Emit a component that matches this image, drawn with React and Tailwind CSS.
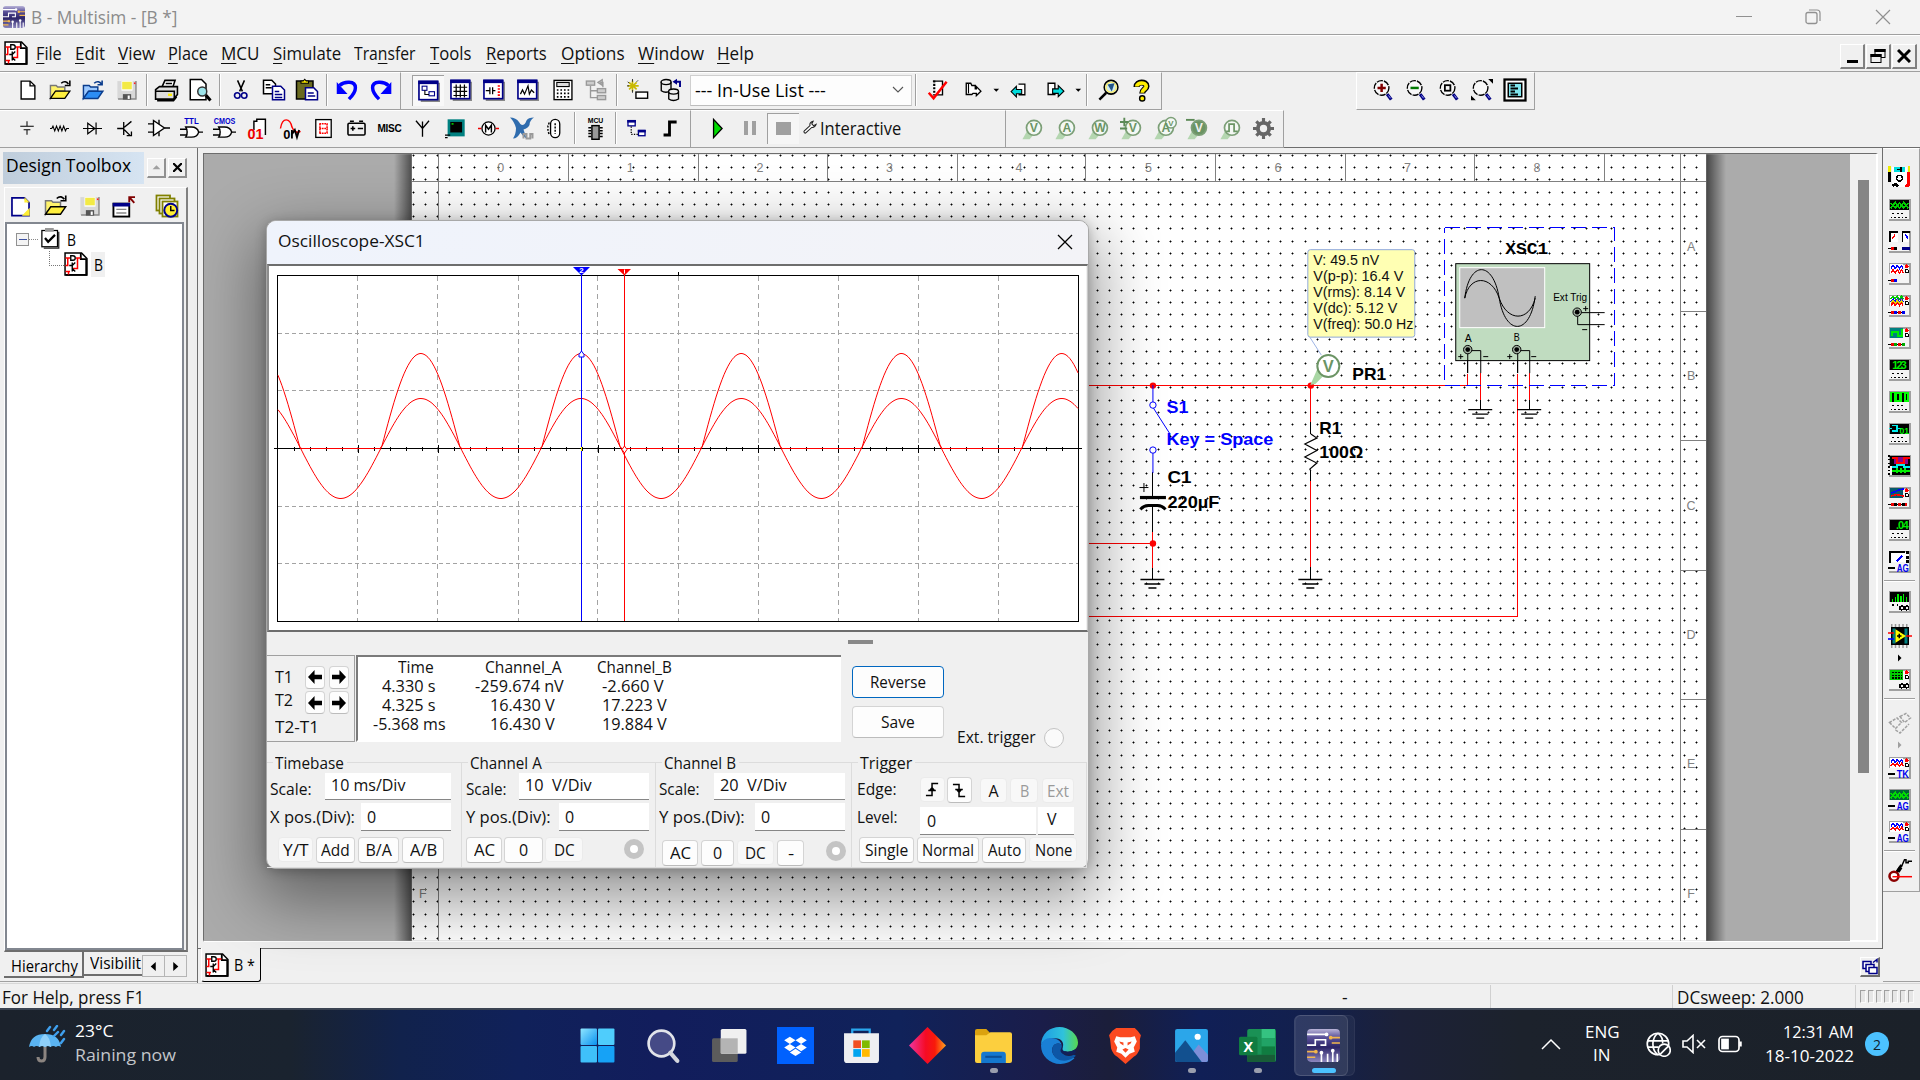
import React, { useLayoutEffect, useRef } from "react";

/* ---------- helpers ---------- */

// One line of text squeezed or stretched to a given width.
function Fit({ w, className = "", children }) {
  const outer = useRef(null);
  const inner = useRef(null);
  useLayoutEffect(() => {
    const natural = inner.current.offsetWidth;
    outer.current.style.width = w + "px";
    inner.current.style.transform = "scaleX(" + w / natural + ")";
  }, [w]);
  return (
    <span ref={outer} className={"inline-block shrink-0 whitespace-pre " + className}>
      <span ref={inner} className="inline-block origin-left">{children}</span>
    </span>
  );
}

const R = ({ f = "#000", b, ...p }) => {
  const [x, y, w, h] = b;
  return <rect x={x} y={y} width={w} height={h} fill={f} {...p} />;
};
const L = ({ d, c = "#000", w = 1, f = "none", ...p }) => <path d={d} stroke={c} strokeWidth={w} fill={f} {...p} />;
const Svg = ({ s = 22, className = "", children, crisp = false, vb = "0 0 16 16" }) => (
  <svg width={s} height={s} viewBox={vb} className={"shrink-0 overflow-visible " + className} shapeRendering={crisp ? "crispEdges" : "auto"}>
    {children}
  </svg>
);

/* ---------- icons ---------- */

const SchemPage = () => (
  <>
    <path d="M.7.7h11l3.6 3.6v11H.7z" fill="#fff" stroke="#000" strokeWidth="1" />
    <path d="M11.2.7v4h4M14.8 5v10.3H1" fill="none" stroke="#000" strokeWidth="1.2" />
    <L c="#f00" d="M1 4h3M1 9h2M1 13h3M8 4h3M9 4v7h-3M2.5 4v5M3 15v-2" />
    <L w={0.9} d="M4.500 2.500h1.500a1.500 1.500 0 0 1 0 3H4.500zM3.500 9h2M5.500 7v6M5.500 9l2-2M5.500 11l2 2" />
  </>
);
const AppArt = () => (
  <>
    <defs><linearGradient id="appart" x2="0" y2="1"><stop offset="0" stopColor="#b9b4d8" /><stop offset=".25" stopColor="#5b529a" /><stop offset=".55" stopColor="#2c2468" /><stop offset="1" stopColor="#8c86bd" /></linearGradient></defs>
    <rect width="16" height="16" rx="2" fill="url(#appart)" />
    <L c="#fff" w={0.8} d="M0 2.600h9M0 7.800h4V5.200h5M4 5.200h5v2.600H6.500M7 11.500V16M10 12v4M12.500 10.500V16M14.700 12v4" />
    <L c="#f2b64d" w={0.8} d="M11 4.200h5M12 6.800h4M0 11h4M0 13.700h4" />
    <g fill="#fff"><circle cx="9.500" cy="2.600" r=".9" /><circle cx="7" cy="11.500" r=".9" /><circle cx="12.500" cy="10.500" r=".9" /></g>
    <g fill="#f2b64d"><circle cx="11.500" cy="4.200" r=".9" /><circle cx="4.300" cy="11" r=".9" /></g>
  </>
);
const G = {
  newdoc: <><path d="M3 1.500h6.500l3.500 3.500v9.500H3z" fill="#fff" stroke="#000" /><L d="M9.500 1.500v3.500h3.500" /></>,
  open: <><path d="M1 4.500h4l1 1h5v3H5l-4 5z" fill="#fff36b" stroke="#777" /><path d="M1 13.500 4.500 8.500h10L11 13.500z" fill="#ffef3e" stroke="#000" strokeWidth=".9" /><L w={1.1} d="M8.500 3c2-2 4-1 5 .500M14.500 1v3.500h-3.500" /></>,
  openblue: <><path d="M1 4.500h4l1 1h5v3H5l-4 5z" fill="#9cc9ff" stroke="#0a3c8c" /><path d="M1 13.500 4.500 8.500h10L11 13.500z" fill="#2c8df5" stroke="#0a3c8c" /><L c="#0a3c8c" w={1.1} d="M8.500 3c2-2 4-1 5 .500M14 1v3h-3.200" /></>,
  save: <><R f="#d8d8d8" b={[1, 1.5, 14, 13]} /><L c="#888" d="M1.500 14.500h13v-13" /><R f="#fff" b={[4, 1.5, 8, 7]} /><R f="#f3ea45" b={[4.5, 2, 7, 5.5]} /><R f="#555" b={[5, 11, 6, 4]} /><R f="#fff" b={[8.5, 12, 1.5, 2.5]} /><R f="#f22" b={[13, 2.5, 1.2, 1.2]} /></>,
  print: <><path d="M5 6 7 1.500h6.500L12 6" fill="#fff" stroke="#000" /><path d="M1 7.500 3.500 5.500h11.500v5l-2.500 3H1z" fill="#ddd" stroke="#000" /><L d="M7.500 3.500h4M1 8.500h12M13 8v5M2 14.500h10.500l2-2.500" /><R f="#fe0" b={[9, 10, 2.5, 1.5]} /></>,
  preview: <><path d="M1.500 1h7.500l3 3v10.500H1.500z" fill="#fff" stroke="#000" /><circle cx="9.500" cy="9" r="3" fill="#9de4ea" stroke="#333" /><L w={2} d="m12 11.500 3 3.500" /></>,
  cut: <><L w={1.1} d="M5.500 1 9 9M10.500 1 7 9" /><g fill="none" stroke="#008" strokeWidth="1.200"><circle cx="5.300" cy="12" r="2" /><circle cx="10.300" cy="12" r="2" /></g></>,
  copy: <><path d="M1 1.500h5.500l2.500 2.500v6.500H1z" fill="#fff" stroke="#000" /><L d="M2.500 4.500h3M2.500 6.500h4" /><path d="M7 5.500h5.500L15 8v6.500H7z" fill="#fff" stroke="#008" /><L c="#008" d="M8.500 9h3M8.500 11h5M8.500 13h5" /></>,
  paste: <><R f="#6a6a20" b={[1, 2, 11, 12]} /><R b={[1, 2, 11, 12]} f="none" stroke="#000" /><path d="M4 3.500V2h1.500L6.500.800 7.500 2H9v1.500z" fill="#fe0" stroke="#000" strokeWidth=".7" /><path d="M7 6.500h5.500L15 9v5.500H7z" fill="#fff" stroke="#008" /><L c="#008" d="M8.500 10h4M8.500 12h5" /></>,
  undo: <><L c="#00f" w={2.4} d="M2.500 4.500c3-3 11-3.500 11 1.500 0 3-2 5.500-4.500 8" /><path d="M.5 2v8.500H8z" fill="#00f" /></>,
  redo: <><L c="#00f" w={2.4} d="M13.500 4.500c-3-3-11-3.500-11 1.500 0 3 2 5.500 4.500 8" /><path d="M15.500 2v8.500H8z" fill="#00f" /></>,
  frame: <><R f="#888" b={[2, 2, 14, 14]} /><R f="#fff" b={[0.7, 1, 13.6, 13.3]} stroke="#008" strokeWidth="1.200" /><R f="#008" b={[0.2, 0.5, 14.6, 2.5]} /></>,
  help: <><L w={4.2} d="M4.500 5.500C4.500 1.500 11.500 1.500 11.500 5c0 2-3 2.500-3 5" /><L c="#fe0" w={2.6} d="M4.700 5.300C4.700 2 11.300 2 11.300 5c0 2-2.800 2.500-2.800 4.500" /><circle cx="8.500" cy="13.500" r="1.800" fill="#fe0" stroke="#000" /></>,
  mcu: <><text x="8" y="4.500" fontSize="4.800" fontWeight="bold" textAnchor="middle" fontFamily="Liberation Sans">MCU</text><R f="#999" b={[5.5, 6, 5, 9.5]} stroke="#000" /><L d="M3 7.500h2M3 9.500h2M3 11.500h2M3 13.500h2M11 7.500h2M11 9.500h2M11 11.500h2M11 13.500h2" /></>,
  hier: <><R f="#fff" b={[1.5, 2, 5.5, 4]} stroke="#008" /><R f="#008" b={[1, 1.5, 6.5, 2]} /><R f="#fff" b={[9.5, 9.5, 5, 4]} stroke="#008" /><R f="#008" b={[9, 9, 6, 2]} /><L d="M4 6.500v6h5" strokeDasharray="1 1" /></>,
};
const Frame = ({ children }) => <Svg>{G.frame}{children}</Svg>;
const Mag = ({ children }) => (
  <Svg>
    <circle cx="7" cy="6.500" r="5.300" fill="#f8f8f8" stroke="#000" strokeWidth="1" strokeDasharray="4.500 .8" />
    <L c="#000080" w={2.4} d="m11 11 3 4" />
    <L c="#99f" w={0.7} d="m12 12 1.500 2" />
    {children}
  </Svg>
);

const Sep = ({ className = "w-[8px]" }) => (
  <div className={"flex h-[32px] shrink-0 justify-center " + className}><div className="w-[2px] border-l border-r border-l-[#a0a0a0] border-r-white" /></div>
);
const C = ({ className = "w-[33px]", children }) => (
  <div className={"flex h-[32px] shrink-0 items-center justify-center " + className}>{children}</div>
);
const I = ({ n, s = 22, w }) => <C className={w}><Svg s={s}>{G[n]}</Svg></C>;
const Drop = ({ className = "w-[12px]" }) => <C className={className}><Svg s={7}><path d="M1 4h13l-6.500 7z" /></Svg></C>;
const Bar = ({ className = "", children }) => (
  <div className={"flex h-[38px] shrink-0 items-center border-t border-r border-b border-t-white border-r-[#a0a0a0] border-b-[#a0a0a0] pb-[2px] " + className}>{children}</div>
);

const ProbeI = ({ t, filled, sign, children }) => (
  <C>
    <Svg s={23}>
      <path d="M1 15.500 4 10l5 2-3 3.500z" fill="#b4d6b0" />
      <circle cx="9" cy="7.500" r="5.200" fill={filled ? "#6b9464" : "#f4f8f4"} stroke="#7c9f77" strokeWidth="1.200" />
      {children}
      <text x="9" y="10.500" fontSize="8.500" fontWeight="bold" textAnchor="middle" fill={filled ? "#f0f0f0" : "#6b9464"} fontFamily="Liberation Sans">{t}</text>
      {sign && <L c="#5d8a57" w={1.3} d={sign} />}
    </Svg>
  </C>
);

/* ---------- top bars ---------- */

function TitleBar() {
  return (
    <div className="flex h-[35px] items-center border-b border-[#a0a0a0] bg-[#f3f3f3] pl-[3px] text-[#8b8b8b]">
      <Svg s={22}><AppArt /></Svg>
      <Fit w={146} className="ml-[6px] text-[18px] leading-[30px]">B - Multisim - [B *]</Fit>
      <div className="ml-auto flex h-full items-center text-[#909090]">
        <svg width="16" height="16" className="mr-[53px]"><L c="currentColor" d="M0 7.500h16" /></svg>
        <svg width="16" height="16" className="mr-[54px]"><rect x="1" y="3.500" width="11" height="11" rx="2" fill="none" stroke="currentColor" strokeWidth="1.300" /><L c="currentColor" w={1.2} d="M4 1h8q3 0 3 3v8" /></svg>
        <svg width="16" height="16" className="mr-[29px]"><L c="currentColor" w={1.2} d="m1 1 14 14M15 1 1 15" /></svg>
      </div>
    </div>
  );
}

const U = ({ children }) => <span className="underline decoration-1 underline-offset-[3px]">{children}</span>;
const MdiBtn = ({ children }) => (
  <div className="flex h-[25px] w-[25px] items-center justify-center border-t border-r-2 border-b-2 border-l border-t-white border-r-[#808080] border-b-[#808080] border-l-white">{children}</div>
);

function MenuBar() {
  return (
    <div className="flex h-[37px] items-center border-t border-b border-t-white border-b-[#a0a0a0] pb-[2px] pl-[4px] text-[17.500px] leading-[30px] text-[#111]">
      <Svg s={24}><SchemPage /></Svg>
      <Fit w={26} className="ml-[8px]"><U>F</U>ile</Fit>
      <Fit w={30} className="ml-[13px]"><U>E</U>dit</Fit>
      <Fit w={37} className="ml-[13px]"><U>V</U>iew</Fit>
      <Fit w={40} className="ml-[13px]"><U>P</U>lace</Fit>
      <Fit w={39} className="ml-[13px]"><U>M</U>CU</Fit>
      <Fit w={68} className="ml-[13px]"><U>S</U>imulate</Fit>
      <Fit w={61} className="ml-[13px]">Tra<U>n</U>sfer</Fit>
      <Fit w={41} className="ml-[15px]"><U>T</U>ools</Fit>
      <Fit w={61} className="ml-[15px]"><U>R</U>eports</Fit>
      <Fit w={64} className="ml-[14px]"><U>O</U>ptions</Fit>
      <Fit w={66} className="ml-[13px]"><U>W</U>indow</Fit>
      <Fit w={37} className="ml-[13px]"><U>H</U>elp</Fit>
      <div className="mt-[8px] mr-[3px] ml-auto flex gap-[1px]">
        <MdiBtn><svg width="13" height="16"><R b={[1, 12, 11, 3]} /></svg></MdiBtn>
        <MdiBtn><svg width="16" height="16"><R f="#f0f0f0" b={[5, 1.5, 10, 8]} stroke="#000" /><R b={[4.5, 1, 11, 3]} /><R f="#f0f0f0" b={[1, 6.5, 10, 8]} stroke="#000" /><R b={[0.5, 6, 11, 3]} /></svg></MdiBtn>
        <MdiBtn><svg width="14" height="14"><L w={3} d="m1 1 12 12M13 1 1 13" /></svg></MdiBtn>
      </div>
    </div>
  );
}

function ToolbarOne() {
  return (
    <div className="flex h-[38px]">
      <Bar className="w-[401px] pl-[11px]">
        <I n="newdoc" /><I n="open" s={23} /><I n="openblue" s={23} /><I n="save" />
        <Sep className="w-[7px]" />
        <I n="print" s={25} /><I n="preview" s={24} />
        <Sep />
        <I n="cut" /><I n="copy" s={24} /><I n="paste" s={24} />
        <Sep />
        <I n="undo" s={23} /><I n="redo" s={23} />
      </Bar>
      <Bar className="w-[761px] pl-[11px]">
        <div className="flex h-[31px] w-[32px] items-center justify-center border-t border-l border-[#a0a0a0] bg-[#f8f8f8]">
          <Frame><R f="#fff" b={[3, 4.5, 3.5, 3]} stroke="#008" strokeWidth=".8" /><R f="#fff" b={[8, 8.5, 4, 3]} stroke="#008" strokeWidth=".8" /><L w={0.8} d="M5 7.500v3h3" /></Frame>
        </div>
        <C><Frame><L w={0.9} d="M2.500 6h10M2.500 9h10M2.500 12h10M4.500 4v9.500M7.500 4v9.500M10.500 4v9.500" /></Frame></C>
        <C className="w-[34px]"><Frame><L w={0.9} d="M2 8.500h3M5 6v5M7 6v5M7 8.500h2" /><L c="#f00" w={1.6} strokeDasharray="1.200 1" d="M11.500 4.500v9" /></Frame></C>
        <C className="w-[34px]"><Frame><L w={0.9} d="M2.500 11 4 8l1.500 3L8 5l1 6 1.500-3 2 2" /></Frame></C>
        <C className="w-[35px]"><Svg><R f="#fff" b={[1.5, 1, 13, 14]} stroke="#000" strokeWidth="1" /><R f="#ddd" b={[3.5, 2.5, 9, 3]} stroke="#000" strokeWidth=".8" /><L w={1.2} strokeDasharray="1.200 1.400" d="M3.500 8h9M3.500 10.500h9M3.500 13h9" /></Svg></C>
        <C className="w-[32px]"><Svg><g fill="#ccc" stroke="#999"><rect x="1" y="1.500" width="6" height="3" /><rect x="9" y="7" width="6" height="3" /><rect x="9" y="12" width="6" height="3" /></g><L c="#999" d="M4 5v8.500h5M4 8.500h5M13 6V2.500h-2M9.500 2.500l3-2v4z" /></Svg></C>
        <Sep className="w-[9px]" />
        <C><Svg><L c="#c9b900" w={1.2} d="M4 1v8M.5 5h8M1.500 2.500l5.500 5M7 2.500l-5.500 5" /><L c="#333" w={0.7} d="M4 0v2M.5 2l1 1M7 2l1-1M4 8v2M0 5h1.500" /><R f="#fff" b={[6.5, 9.5, 8.5, 4.5]} stroke="#000" /></Svg></C>
        <C><Svg s={24}><g fill="#eee" stroke="#000" strokeWidth=".9"><path d="M1.500 2.500v6q3 2 6.500 0v-6" /><ellipse cx="4.700" cy="2.700" rx="3.300" ry="1.700" /><path d="M6.500 9v5q3 2 6.500 0V9" /><ellipse cx="9.700" cy="9" rx="3.300" ry="1.700" /></g><L c="#008" w={1.3} d="M14 6V2.500h-2" /><path d="m9 2.500 3-2v4z" fill="#008" /></Svg></C>
        <div className="ml-[3px] flex h-[31px] w-[222px] items-center border border-[#cfcfcf] border-b-[#bdbdbd] bg-[#fdfdfd] pl-[4px]">
          <Fit w={131} className="text-[17.500px] leading-[26px]">--- In-Use List ---</Fit>
          <svg width="12" height="8" className="ml-[66px]"><L c="#555" w={1.1} d="m1 1 5 5 5-5" /></svg>
        </div>
        <Sep />
        <C><Svg><path d="M5 1.500h7v10H5" fill="#fff" stroke="#000" /><L d="M6 1v10" strokeDasharray="1.500 1" w={1.6} /><L c="#f00" w={1.8} d="m2 10 3.500 4L15 2" /></Svg></C>
        <C className="w-[39px]"><Svg s={18}><path d="M2 2h4l1 2h3v3h1V5l4 4-4 4v-2H8l-1 1H2z" fill="#fff" stroke="#000" strokeWidth="1.200" /><L d="M4 2v9" /></Svg></C>
        <Drop className="w-[8px]" />
        <C className="w-[37px]"><Svg s={17}><path d="M8 2h6v10H8" fill="#fff" stroke="#000" strokeWidth="1.200" /><path d="M1 9l5-5v3h5v4H6v3z" fill="#0dd" stroke="#000" /></Svg></C>
        <C className="w-[37px]"><Svg s={18}><path d="M1 2h6v10H1z" fill="#fff" stroke="#000" strokeWidth="1.200" /><path d="M15 9l-5-5v3H5v4h5v3z" fill="#0dd" stroke="#000" /></Svg></C>
        <Drop className="w-[8px]" />
        <Sep className="w-[10px]" />
        <C><Svg><circle cx="9.500" cy="6" r="5" fill="#cfeaf2" stroke="#000" strokeWidth="1.100" /><circle cx="9.500" cy="6" r="3.700" fill="none" stroke="#fe6" /><path d="m7 4 5-1-2 6z" fill="#258" /><L w={1.8} d="m6 10-5 5" /></Svg></C>
        <I n="help" w="w-[32px]" s={23} />
      </Bar>
      <div className="ml-[194px] flex">
        <Bar className="w-[179px] border-l border-l-white pl-[9px]">
          <C><Mag><L c="#800000" w={1.8} d="M4 6.500h6M7 3.500v6" /></Mag></C>
          <C><Mag><L c="#007800" w={1.8} d="M4 6.500h6" /></Mag></C>
          <C><Mag><R f="none" b={[5, 4.5, 4, 4]} stroke="#000" strokeWidth="1.300" /></Mag></C>
          <C><Mag><path d="M12.500 0H16v3.500zM0 12l3.500 3.500H0z" /></Mag></C>
          <C><Svg s={24}><R f="#fff" b={[1, 1, 14, 14]} stroke="#000" strokeWidth="1.500" /><R f="#7fe6ee" b={[3.5, 3.5, 9, 9]} stroke="#000" /><L w={1.2} d="M5 5h3M5 7h5M5 9h3M5 11h5" /></Svg></C>
        </Bar>
      </div>
    </div>
  );
}

const Gate = ({ t, w }) => (
  <C><Svg s={23}>
    <text x="8" y="5.200" fontSize="5.800" fontWeight="bold" fill="#00c" textAnchor="middle" textLength={w} lengthAdjust="spacingAndGlyphs" fontFamily="Liberation Sans">{t}</text>
    <path d="M4 7h4q4 0 5 3.500Q12 14 8 14H4q2-3.500 0-7z" fill="#fff" stroke="#000" /><L d="M0 8.500h5M0 12.500h5M13 10.500h3" />
  </Svg></C>
);

function ToolbarTwo() {
  return (
    <div className="flex h-[38px] border-b border-[#6d6d6d]">
      <Bar className="w-[691px] pl-[10px]">
        <C><Svg s={18}><L w={0.9} d="M8 2v4.500M2 6.500h12M5 9.500h6M8 9.500V14" /></Svg></C>
        <C><Svg s={19}><L w={0.9} d="M0 8h1.500l1-2 1.500 4 1.500-4 1.500 4 1.500-4 1.500 4 1.500-4 1.500 4 1-2h2" /></Svg></C>
        <C><Svg s={19}><path d="M4 3.500v9L10 8z" fill="#fff" stroke="#000" /><L d="M0 8h16M11 3v10" /></Svg></C>
        <C><Svg s={19}><L d="M1 8h5M6.500 2.500v11M7 7l6-5M7 9l5 5M9 14h4v-3.500" w={1.1} /></Svg></C>
        <C><Svg><path d="M4 2.500v11L12 8z" fill="#fff" stroke="#000" /><L d="M0 5h4M0 11h4M12 8h4M8 2v3M8 11v3" /></Svg></C>
        <Gate t="TTL" w={10} /><Gate t="CMOS" w={15} />
        <C><Svg s={23}><path d="M5.500 9V3h2V1.500h6V12.500" fill="#fff" stroke="#000" strokeWidth="1" /><text x="1" y="15.500" fontSize="10" fontWeight="bold" fill="#e00" fontFamily="Liberation Sans">01</text></Svg></C>
        <C><Svg s={23}><L c="#f00" d="M1 8q1-6 4-6t4 5q2 5 6 3" w={1} /><text x="3" y="15.500" fontSize="9" fontWeight="bold" fontFamily="Liberation Sans">0</text><L w={1.3} d="M9 9v6M9 12l2-3 1.500 5 1.500-5" /></Svg></C>
        <C><Svg s={19}><R f="#fff" b={[1.5, 0.5, 13, 15]} stroke="#000" strokeWidth="1.100" /><L c="#f00" w={1.3} strokeDasharray="1.500 .6" d="M4.500 4h7M4.500 8h7M4.500 12h7M5 4v8M11 4v8" /></Svg></C>
        <C><Svg s={21}><R f="#f0f0f0" b={[1.5, 4, 13, 9]} stroke="#000" strokeWidth="1.200" rx="1" /><L w={1.2} d="M3 2.500h3M10 2.500h3M3.500 8h3.500M9 8h4M5.200 6.300v3.500" /></Svg></C>
        <C><span className="font-['Liberation_Sans'] text-[10px] font-bold tracking-[-0.200px]">MISC</span></C>
        <C><Svg s={19}><L d="M8 15V2M2.500 1.500 8 8l5.500-6.500" w={1.1} /></Svg></C>
        <C><Svg s={21}><R f="#008080" b={[2, 1, 13, 13]} /><R b={[4, 3, 9, 8]} /><R f="#0f0" b={[5, 4, 1.5, 1]} /><L d="M0 13h4M0 15h2" /></Svg></C>
        <C><Svg s={21}><circle cx="8" cy="8" r="5" fill="#fff" stroke="#000" /><L c="#e00" w={1.3} d="M0 8h2.500M13.500 8H16" /><L d="M5.800 11V5.500L8 8.500l2.200-3V11" w={1.1} /></Svg></C>
        <C><Svg s={24}><path d="M0 1q4 0 6 3 1 2 2 2 2 0 3-3 1-2 5-2-3 2-3 5-1 2-4 3l2 6q-3-2-4-4-2 4-5 4 2-3 2-7-1-4-4-7z" fill="#2f6cae" /><L c="#999" w={1.3} d="M9 15v-3h2v3h2.500v-3H15v3" /></Svg></C>
        <C><Svg s={21}><R f="#fff" b={[5, 1, 7, 14]} rx="3.500" stroke="#000" /><L d="M4 3.500 3 6v4l1 2.500M8.500 4v8" strokeDasharray="1.500 1" w={1.1} /></Svg></C>
        <Sep />
        <I n="mcu" s={23} />
        <Sep />
        <I n="hier" s={21} />
        <C><Svg s={19}><L w={2.4} d="M3 13.500h5V2.500h6" /></Svg></C>
      </Bar>
      <Bar className="w-[315px] pl-[10px]">
        <C className="w-[32px]"><Svg s={21}><path d="M5 1v14l6.500-7z" fill="#0d0" stroke="#000" /></Svg></C>
        <C className="w-[34px]"><div className="flex h-[14px] gap-[4px]"><div className="w-[4px] bg-[#a0a0a0]" /><div className="w-[4px] bg-[#a0a0a0]" /></div></C>
        <div className="flex h-[31px] w-[32px] items-center justify-center border-t border-l border-[#a0a0a0] bg-[#f6f6f6]"><div className="h-[13px] w-[15px] bg-[#a0a0a0]" /></div>
        <Svg s={14} className="mb-[3px] ml-[4px]"><path d="M1.500 14.500q-1-1 0-2L8 6.500Q7 3 11.500 1.500L10 4.500l2 2 3-1.500q-1.500 4-5 3.500l-6.500 6q-1 1-2 0z" fill="#fff" stroke="#222" strokeWidth="1.200" /></Svg>
        <Fit w={81} className="ml-[3px] text-[17.500px] leading-[28px] text-[#111]">Interactive</Fit>
      </Bar>
      <Bar className="w-[278px] pl-[10px]">
        <ProbeI t="V" /><ProbeI t="A" /><ProbeI t="W" />
        <ProbeI t="V" sign="M0 3.500h6M3 .500v6M0 8h5" />
        <ProbeI t="A"><circle cx="12.500" cy="4" r="3.700" fill="#f4f8f4" stroke="#7c9f77" /><text x="12.500" y="6" fontSize="5.500" fontWeight="bold" textAnchor="middle" fill="#6b9464" fontFamily="Liberation Sans">V</text></ProbeI>
        <ProbeI t="V" filled sign="M0 2h6" />
        <ProbeI><L c="#6b9464" w={1.2} d="M5 10h2V5h3.500v5H13" /></ProbeI>
        <C><Svg s={21}><g stroke="#666" strokeWidth="3" fill="none"><circle cx="8" cy="8" r="4.300" /><path strokeWidth="2.400" d="M8 0v3M8 13v3M0 8h3M13 8h3M2.500 2.500l2 2M11.500 11.500l2 2M2.500 13.500l2-2M11.500 4.500l2-2" /></g></Svg></C>
      </Bar>
    </div>
  );
}

/* ---------- design toolbox ---------- */

function DesignToolbox() {
  return (
    <div className="flex h-full w-[198px] flex-col border-r border-[#6d6d6d] pt-[4px]">
      <div className="flex h-[32px] pl-[3px]">
        <div className="flex w-[141px] items-center bg-linear-to-r from-[#bfcddb] to-[#d6e4f2] pb-[5px] pl-[3px] text-[18px]"><Fit w={125}>Design Toolbox</Fit></div>
        <div className="mt-[6px] ml-[3px] flex gap-[2px]">
          <div className="flex h-[20px] w-[19px] items-center justify-center border-t border-r-2 border-b-2 border-l border-t-white border-r-[#909090] border-b-[#909090] border-l-white"><Svg s={9}><path d="M1 11h14L8 4z" fill="#a0a0a0" /></Svg></div>
          <div className="flex h-[20px] w-[19px] items-center justify-center border-t border-r-2 border-b-2 border-l border-t-white border-r-[#909090] border-b-[#909090] border-l-white"><svg width="9" height="9"><L w={2.2} d="m0 0 9 9M9 0 0 9" /></svg></div>
        </div>
      </div>
      <div className="mt-[3px] ml-[4px] flex h-[765px] w-[184px] flex-col border-t border-r-2 border-b-2 border-l border-t-white border-r-[#808080] border-b-[#6d6d6d] border-l-white">
        <div className="flex h-[34px] items-center pt-[2px]">
          <C className="ml-[-2px] w-[35px]"><Svg s={21}><path d="M1.500 1.500H11l3.500 3.500v10h-13z" fill="#fff" stroke="#008" strokeWidth="1.300" /><path d="M11 1v4h4M15 9v6H9z" fill="#fe3" /></Svg></C>
          <I n="open" s={24} w="w-[35px]" /><I n="save" s={22} />
          <C className="w-[34px]"><Svg s={23}><R f="#fff" b={[1, 6, 11, 9]} stroke="#000" strokeWidth="1.300" /><R f="#008" b={[0.5, 5.5, 12, 2.5]} /><L c="#888" d="M3 10h7M3 12.500h7" /><L c="#800000" w={1.3} d="m15.500 5.500-3-3.500M12 5V1.500h4" /></Svg></C>
          <div className="ml-[7px] h-px w-[4px] bg-[#999]" />
          <C className="w-[40px]"><Svg s={24}><g fill="#fff" stroke="#808000" strokeWidth="1.200"><rect x="1" y="1" width="9" height="10" /><rect x="3" y="3" width="10" height="10" /><rect x="5" y="5" width="10" height="10" /></g><circle cx="10.500" cy="10.800" r="4.300" fill="#fe3" stroke="#008" strokeWidth="1.300" /><L d="M10.500 8v3h2.500" /></Svg></C>
        </div>
        <div className="h-[728px] w-[179px] border-2 border-[#828790] bg-white pt-[2px] text-[17px] leading-[25px]">
          <div className="flex h-[26px] items-center pl-[9px]">
            <div className="flex h-[13px] w-[13px] items-center justify-center border border-[#919191] bg-[#f4f4f4]"><div className="h-px w-[8px] bg-[#3c50a0]" /></div>
            <div className="w-[9px] border-t border-dotted border-[#888]" />
            <Svg s={20} className="mb-[3px] ml-[2px]"><R f="#fff" b={[1.5, 2, 12.5, 13]} stroke="#000" strokeWidth="1" /><L w={1} d="M15 3v13H3" c="#222" /><R f="#999" b={[4, 0, 7, 3]} /><L w={1.8} d="m4 8 2.500 3L12 5.500" /></Svg>
            <Fit w={9} className="ml-[7px]">B</Fit>
          </div>
          <div className="flex h-[26px] items-center pl-[42px]">
            <div className="mb-[14px] h-[15px] w-[15px] border-b border-l border-dotted border-[#777]" />
            <Svg s={24} className="mb-[3px]"><SchemPage /></Svg>
            <div className="mb-[2px] ml-[3px] flex w-[14px] justify-center bg-[#f0f0f0]"><Fit w={9}>B</Fit></div>
          </div>
        </div>
      </div>
      <div className="flex h-[30px] items-start pl-[4px] text-[17px]">
        <div className="flex h-[26px] w-[80px] shrink-0 items-center border-r-2 border-b-2 border-[#6d6d6d] pt-[3px] pl-[7px]"><Fit w={67} className="leading-[22px]">Hierarchy</Fit></div>
        <div className="flex h-[24px] w-[58px] shrink-0 items-center border-b-2 border-[#6d6d6d] pl-[6px]"><Fit w={51} className="leading-[20px]">Visibilit</Fit></div>
        <div className="mt-[3px] flex h-[22px] w-[45px] shrink-0 border border-[#b5b5b5]">
          <div className="flex w-[22px] items-center justify-center border-r border-[#b5b5b5]"><Svg s={9}><path d="M12 0v16L3 8z" /></Svg></div>
          <div className="flex w-[21px] items-center justify-center"><Svg s={9}><path d="M4 0v16l9-8z" /></Svg></div>
        </div>
      </div>
      <div className="mt-[-1px] w-[197px] border-t border-[#a0a0a0]" />
    </div>
  );
}

/* ---------- schematic ---------- */

const DOTS = (() => {
  const out = [[], []];
  for (let j = 0; j < 65; j++)
    for (let i = 0; i < 106; i++) {
      const x = Math.round(412.5 + i * 12.235);
      const y = Math.round(155 + j * 12.235);
      out[0].push("M" + x + " " + y + "h1v1h-1z");
      out[1].push("M" + (x - 1) + " " + y + "h3v1h-3zM" + x + " " + (y - 1) + "h1v3h-1z");
    }
  return out.map((a) => a.join(""));
})();

const Ground = ({ x, y }) => <L w={1.3} d={`M${x - 12} ${y}h24M${x - 8} ${y + 4.5}h16M${x - 4} ${y + 8.5}h8`} />;
const Lbl = ({ x, y, w, s = 16, f = "#000", b = true, ff = "Liberation Sans", children }) => (
  <text x={x} y={y} textLength={w} lengthAdjust="spacingAndGlyphs" fontSize={s} fontWeight={b ? "bold" : "normal"} fill={f} fontFamily={ff}>{children}</text>
);
const Term = ({ x, y }) => <><circle cx={x} cy={y} r="4.200" fill="#a5b5a5" stroke="#000" /><circle cx={x} cy={y} r="2.400" /></>;

function Schematic() {
  return (
    <svg width="1647" height="787" viewBox="204 154 1647 787" className="block bg-[#ababab]">
      <defs>
        <linearGradient id="sl"><stop offset="0" stopColor="#000" stopOpacity="0" /><stop offset="1" stopColor="#000" stopOpacity=".55" /></linearGradient>
        <linearGradient id="sr"><stop offset="0" stopColor="#000" stopOpacity=".6" /><stop offset="1" stopColor="#000" stopOpacity="0" /></linearGradient>
      </defs>
      <rect x="394" y="154" width="18" height="787" fill="url(#sl)" />
      <rect x="1707" y="154" width="20" height="787" fill="url(#sr)" />
      <rect x="412" y="154" width="1295" height="787" fill="#fff" />
      <path d={DOTS[1]} fill="#868686" shapeRendering="crispEdges" />
      <path d={DOTS[0]} fill="#000" shapeRendering="crispEdges" />
      <g stroke="#808080" fill="none" shapeRendering="crispEdges">
        <path d="M412 181.500h1295M438.500 154v787M1681.500 154v787" />
        {Array.from({ length: 9 }, (_, k) => <path key={k} d={`M${Math.round(568 + k * 129.6)}.5 154v27`} />)}
        {Array.from({ length: 5 }, (_, k) => <path key={k} d={`M412 ${Math.round(311 + k * 129.4)}.5h26M1681 ${Math.round(311 + k * 129.4)}.5h26`} />)}
      </g>
      <g fill="#808080" fontSize="12.500" textAnchor="middle" fontFamily="Liberation Sans">
        {Array.from({ length: 9 }, (_, k) => <text key={k} x={501 + k * 129.6} y="172">{k}</text>)}
        {"ABCDEF".split("").map((c, k) => <text key={c} x="1692" y={251 + k * 129.4}>{c}</text>)}
        <text x="423" y="898">F</text>
      </g>

      <g transform="translate(1 0)">
        {/* wires */}
        <g shapeRendering="crispEdges">
          <L c="#f00" d="M1000 385.500h467.500v-12M1000 543.500h152M1000 616.500h517.500v-243M1310.500 385v38M1310.500 480v87M1152.500 532v36M1480.500 373v27M1529.500 373v27" />
          <L d="M1310.500 422v12M1310.500 471v10M1310.500 567v12M1152.500 472v25M1152.500 507v25M1152.500 568v11M1480.500 400v9M1529.500 400v9M1467.500 349v24M1517.500 349v24" />
        </g>
        <g fill="#f00"><circle cx="1152.500" cy="385.500" r="3.200" /><circle cx="1310.500" cy="385.500" r="3.200" /><circle cx="1152.500" cy="543.500" r="3.200" /></g>
        <L w={1.2} d="M1310.500 434l6 4-12 6 12 6.500-12 6.500 12 6-7 6 1 2" />
        <Ground x={1152} y={579.5} /><Ground x={1310} y={579.5} /><Ground x={1480} y={409.5} /><Ground x={1529} y={409.5} />
        <g stroke="#00f" fill="#fff"><path d="M1152.500 385v17M1152.500 453v20M1153 408l16 25" fill="none" /><circle cx="1152.500" cy="405" r="3.200" /><circle cx="1152.500" cy="450" r="3.200" /></g>
        <L w={3.2} d="M1139.500 497.500h26" />
        <L w={3} d="M1140 509.500q3-4 8-4h9q5 0 8 4" />
        <L d="M1139 487.500h9M1143.500 483v9" />
        <Lbl x={1166} y={412.5} w={22} f="#00f">S1</Lbl>
        <Lbl x={1166} y={445} w={107} f="#00f">Key = Space</Lbl>
        <Lbl x={1167} y={482.5} w={24}>C1</Lbl>
        <Lbl x={1167} y={507.5} w={52}>220µF</Lbl>
        <Lbl x={1319} y={434} w={22}>R1</Lbl>
        <Lbl x={1319} y={458} w={44}>100Ω</Lbl>
        <Lbl x={1352} y={379.5} w={34}>PR1</Lbl>

        {/* probe and its readout */}
        <path d="M1309.500 337 1321 355" stroke="#9db4e4" />
        <path d="m1310 385 7-16 7 6-9 9z" fill="#a9d7a4" />
        <circle cx="1328" cy="366" r="11" fill="#fff" stroke="#6b9464" strokeWidth="2" />
        <Lbl x={1322.500} y={371.5} w={11} s={16} f="#6b9464">V</Lbl>
        <rect x="1307.500" y="249.500" width="107" height="87.500" rx="2.500" fill="#ffffb3" stroke="#8fa8dc" />
        <Lbl b={false} s={14.500} f="#111" x={1313} y={265} w={66}>V: 49.5 nV</Lbl>
        <Lbl b={false} s={14.500} f="#111" x={1313} y={281} w={90}>V(p-p): 16.4 V</Lbl>
        <Lbl b={false} s={14.500} f="#111" x={1313} y={297} w={92}>V(rms): 8.14 V</Lbl>
        <Lbl b={false} s={14.500} f="#111" x={1313} y={313} w={84}>V(dc): 5.12 V</Lbl>
        <Lbl b={false} s={14.500} f="#111" x={1313} y={329} w={100}>V(freq): 50.0 Hz</Lbl>

        {/* oscilloscope symbol */}
        <rect x="1455.500" y="263.500" width="134" height="97" fill="#c0dcc0" stroke="#000" />
        <rect x="1459.500" y="267.500" width="85" height="60" fill="#c0c0c0" stroke="#fff" />
        <L d="M1464.500 298C1469 260 1493 260 1499 298S1530 336 1535 296" />
        <L d="M1464.500 298C1469 275 1491 274 1499 298S1529 322 1535 298" />
        <Lbl b={false} s={10.500} x={1553} y={300.500} w={34}>Ext Trig</Lbl>
        <Lbl b={false} s={10} x={1464.500} y={342} w={7}>A</Lbl>
        <Lbl b={false} s={10} x={1513.500} y={341} w={6}>B</Lbl>
        <L d="M1577.500 312.500h27M1577.500 312v12.500h27M1467 350.500h13.500v22.500M1516 350.500h13.500v22.500M1583 308.500h5M1585.500 306v5M1582 329.500h5M1458 356.500h5M1460.500 354v5M1483 356.500h5M1507 356.500h5M1509.500 354v5M1531 356.500h5" />
        <L d="M1467.500 349v24M1517.500 349v24" />
        <Term x={1577} y={312} /><Term x={1467.500} y={349.500} /><Term x={1516.500} y={349.500} />
        <Lbl ff="Liberation Mono" s={17} x={1505} y={253.500} w={43}>XSC1</Lbl>
      </g>
      <path d="M1445.500 227.500h170v158h-170z" fill="none" stroke="#00f" strokeDasharray="15 6" shapeRendering="crispEdges" />
    </svg>
  );
}

function Workspace() {
  return (
    <div className="flex h-full w-[1685px] flex-col">
      <div className="flex h-[801px] border-r border-b border-[#6d6d6d] pt-[5px] pl-[5px]">
        <div className="flex h-[789px] w-[1675px] border-t border-r-2 border-b-2 border-l border-t-[#6d6d6d] border-r-white border-b-white border-l-[#6d6d6d]">
          <Schematic />
          <div className="flex w-[26px] justify-center pt-[26px]"><div className="h-[593px] w-[11px] bg-[#858585]" /></div>
        </div>
      </div>
      <div className="flex h-[34px] items-start justify-between pr-[3px] pl-[3px]">
        <div className="mt-[-1px] flex h-[34px] w-[60px] items-center rounded-b-[3px] border-r border-b border-l border-r-black border-b-black border-l-white bg-[#f0f0f0] pl-[3px]">
          <Svg s={24}><SchemPage /></Svg>
          <Fit w={21} className="ml-[5px] text-[17px]">B *</Fit>
        </div>
        <div className="mt-[8px] flex h-[20px] w-[20px] items-center justify-center border-t border-r-2 border-b-2 border-l border-t-white border-r-[#6d6d6d] border-b-[#6d6d6d] border-l-white">
          <Svg s={16}><g fill="#fff" stroke="#008" strokeWidth="1.500"><path d="M1 2.500h8v7H1z" /><path d="M4 5.500h8v7H4z" /><path d="M7 8.500h8v6H7z" /></g><L c="#008" w={1.5} d="M11 3.500 15 .500v3" /></Svg>
        </div>
      </div>
    </div>
  );
}

/* ---------- instrument bar ---------- */

const Inst = ({ scr = "#000", full, children, bottom }) => (
  <div className="flex h-[32px] items-center justify-center">
    <Svg s={23} crisp>
      <R f="#a0a0a0" b={[1, 1, 15, 15]} /><R f="#f4f4f4" b={[0, 0.5, 14.5, 14]} />
      <L c="#a0a0a0" d="M1.500 8V1.500h13" />
      <R f={scr} b={full ? [1.5, 1.5, 13, 7] : [1.5, 1.5, 9, 7]} />
      {!full && <><circle cx="13" cy="3" r="1.400" fill="#f00" /><circle cx="13" cy="6.500" r="1.200" fill="#fff" stroke="#000" strokeWidth=".7" /></>}
      {children}
      {bottom || <><L strokeDasharray="1.500 1.500" d="M3 10.500h8" w={0.8} /><L strokeDasharray="1 1.500" d="M2 13.500h12" w={1} /></>}
    </Svg>
  </div>
);
const Tag = ({ t }) => <><L w={1.5} d="M0 12.500h5" /><text x="6" y="15" fontSize="7" fontWeight="bold" fill="#00e" fontFamily="Liberation Sans" textLength="8.500" lengthAdjust="spacingAndGlyphs">{t}</text></>;
const Dots = ({ a = "#e00", b = "#000", w = 12 }) => <><L w={0.9} d={`M0 12.700h${w}`} /><L c={a} w={2} strokeDasharray="2 3" d={`M2 12.700h${w - 2}`} /><L c={b} w={2} strokeDasharray="2 3" d={`M4.500 12.700h${w - 4}`} /></>;
const Zig = ({ y, c, w = 1 }) => <L c={c} w={w} d={`M2 ${y + 1.5}l1.500-2 1.500 2 1.500-2 1.500 2 1.500-2 1 2`} />;
const HSep = () => <div className="flex h-[8px] items-center px-[1px]"><div className="h-[2px] w-full border-t border-b border-t-[#a0a0a0] border-b-white" /></div>;

function InstrumentBar() {
  return (
    <div className="flex h-full w-[37px] flex-col justify-between">
      <div className="flex h-[744px] flex-col border-t border-r border-b border-t-white border-r-[#a0a0a0] border-b-[#a0a0a0] pt-[12px] pr-[3px]">
        <div className="flex h-[32px] items-center justify-center">
          <Svg s={23} crisp><R f="#fff" b={[3, 0.5, 10, 14]} /><R f="#0dd" b={[4.5, 0.5, 7, 4]} /><L d="M6 2.500h2M9 1v3" /><circle cx="8" cy="8.500" r="2" fill="none" stroke="#000" /><L c="#ee0" w={1.5} d="M1 0v4M14.500 0v4" /><L w={2} d="M1 4v7M3 14q2-2 4 0" /><L c="#f00" w={2} d="M14.500 4v8q0 2-3 2" /></Svg>
        </div>
        <Inst full><L c="#0c0" w={1.1} d="M2 3.500l3 3.500 3-3.500 3 3.500 3-3.500M2 7l3-4 3 4 3-4 3 4" /></Inst>
        <Inst full scr="#fff" bottom={<><Dots w={6} /><L c="#008" w={2} d="M10 12.700h5" /></>}><R f="#f0f0f0" b={[7, 1, 3, 8]} /><L d="M1.500 8V1.500H7M10 8V1.500h5" /><L c="#f00" d="m3 6 2-3" /><L c="#00f" d="m12 3 2 3" /></Inst>
        <Inst scr="#fff" bottom={<Dots w={6} b="#00e" />}><Zig y={3} c="#00f" /><Zig y={6} c="#f00" /></Inst>
        <Inst scr="#fff" bottom={<Dots b="#00e" />}><Zig y={2} c="#0c0" /><Zig y={4} c="#00f" /><Zig y={5} c="#dd0" /><Zig y={6.5} c="#f00" /></Inst>
        <Inst scr="#008080" bottom={<Dots b="#0a0" />}><L c="#0e0" w={1.5} d="M3 7V4h4v3h3V2" /></Inst>
        <Inst full><text x="3" y="7.700" fontSize="7.500" fontWeight="bold" fill="#0e0" fontFamily="Liberation Sans" textLength="10">123</text></Inst>
        <Inst full scr="#0f0"><L d="M3.500 2v6M7 3v4M10.500 2v6M13 3v4" /></Inst>
        <Inst full><path d="M3 2.500h3.500v4H3M1 4.500h2M6.500 4.500h3" fill="none" stroke="#0ee" strokeWidth="1.200" /><text x="8" y="8.500" fontSize="6" fontWeight="bold" fill="#0e0" fontFamily="Liberation Sans">01</text></Inst>
        <Inst full bottom={<><R b={[3, 1.5, 12, 13]} /><R f="#808" b={[4, 2, 10, 5]} /><L c="#f00" w={1.3} d="M3 3h3v3h5V3h4" /><L c="#0ee" w={1.3} d="M3 9h3V7.500h5V9h4" /><L c="#0e0" w={1.3} d="M3 12h12M6 10v3M9 10v3M12 10v3" /><L strokeDasharray="1 1.500" d="M.8 1v14" w={1.2} /></>} />
        <Inst scr="#075a6c" bottom={<Dots w={13} />}><L c="#00f" d="M2 5l5-2 4-1" /><L c="#f00" d="M2 7l4-1 5 1" /></Inst>
        <Inst full><text x="5.500" y="7.700" fontSize="7.500" fontWeight="bold" fill="#0e0" fontFamily="Liberation Sans" textLength="9">.04</text></Inst>
        <Inst full scr="#fff" bottom={<Tag t="AG" />}><L d="M1.500 9V1.500h10" w={1.5} /><L c="#00f" w={1.3} d="m6 8 4-4" /><L w={2} strokeDasharray="2 1" d="M13.500 1v8" /></Inst>
        <HSep />
        <Inst full bottom={<><L strokeDasharray="1.500 1.500" d="M3 10.500h4" /><circle cx="9.500" cy="12.500" r="1.300" fill="none" stroke="#000" /><circle cx="13" cy="12.500" r="1.300" fill="none" stroke="#000" /></>}><L c="#0e0" d="M3 6v2M5 5v3M7 3v5M9 4v4M11 2.500v5.500M13 5v3" w={0.8} /></Inst>
        <div className="mt-[3px] flex h-[32px] items-center justify-center">
          <Svg s={24}><L c="#999" strokeDasharray="1 1.500" w={2} d="M2 1h12M2 15h12" /><R b={[2, 2, 12, 12]} /><R f="#008080" b={[3, 3, 2, 10]} /><R f="#008080" b={[11, 3, 2, 10]} /><path d="M5 3.500v9L12 8z" fill="#ff0" /><L d="M6 8h3M7.500 6.500v3" /><L c="#f00" w={1.1} d="M0 6h4M12 8h4" /><L c="#00f" w={1.1} d="M0 10h4" /></Svg>
        </div>
        <div className="flex h-[11px] items-center justify-center"><Svg s={8}><path d="M4 1v14l7-7z" /></Svg></div>
        <Inst scr="#0c0" bottom={<><circle cx="9.500" cy="12.500" r="1.300" fill="none" stroke="#000" /><circle cx="13" cy="12.500" r="1.300" fill="none" stroke="#000" /></>}><L strokeDasharray="1 1" w={0.9} d="M3 3h7M3 5h7M3 7h7" /></Inst>
        <HSep />
        <div className="mt-[5px] flex h-[32px] items-center justify-center"><Svg s={24}><L c="#a0a0a0" w={1} d="M1 7l4 4 4-4-3-3zM8 3l4-2 3 3-4 3zM5 12l3 2 6-6" strokeDasharray="2 .8" /></Svg></div>
        <div className="flex h-[9px] items-center justify-center"><Svg s={8}><path d="M4 1v14l7-7z" fill="#a0a0a0" /></Svg></div>
        <div className="h-[2px]" />
        <Inst scr="#fff" bottom={<Tag t="TK" />}><Zig y={3} c="#00f" /><Zig y={5.5} c="#f00" /></Inst>
        <Inst full scr="#063" bottom={<Tag t="AG" />}><L c="#0d0" w={1.1} d="M2 3.500l3 3.500 3-3.500 3 3.500 3-3.500M2 7l3-4 3 4 3-4 3 4" /></Inst>
        <Inst scr="#fff" bottom={<Tag t="AG" />}><Zig y={3} c="#00f" /><Zig y={5.5} c="#f00" /></Inst>
        <HSep />
        <div className="flex h-[32px] items-center justify-center"><Svg s={24}><L w={1.8} d="M5 10 9 4" /><L w={2.6} d="M6.500 8.500l2-3" /><L w={1} d="M9 5l2-4.500h1v2h1.500V1.500H16" /><circle cx="4" cy="11.500" r="3" fill="#fff" stroke="#8b0000" strokeWidth="1.700" /><L c="#f00" w={1} d="M3 11.800h13" /></Svg></div>
      </div>
      <div className="mb-[1px] border-t border-[#a0a0a0]" />
    </div>
  );
}

/* ---------- oscilloscope window ---------- */

const PX = (x) => Math.cos(((x - 581) / 160.2) * 2 * Math.PI);
const curve = (fn) => {
  let d = "";
  for (let x = 278; x <= 1078; x += 2) d += (d ? "L" : "M") + x + " " + (448.5 - fn(PX(x))).toFixed(1);
  return d;
};
const CH_A = curve((v) => Math.max(0, 97 * v - 2));
const CH_B = curve((v) => 50 * v);
const TICKS = Array.from({ length: 49 }, (_, k) => {
  const h = (k + 1) % 5 === 0 ? 4 : 2;
  return "M" + (294 + k * 16) + ".5 " + (448.5 - h) + "v" + 2 * h;
}).join("");

function Plot() {
  return (
    <svg width="817" height="364" viewBox="269 266 817 364" className="block bg-white">
      <g stroke="#a3a3a3" fill="none" shapeRendering="crispEdges">
        <path strokeDasharray="5 4" d="M357.500 276v345M437.500 276v345M518.500 276v345M597.500 276v345M678.500 276v345M758.500 276v345M838.500 276v345M918.500 276v345M998.500 276v345" />
        <path strokeDasharray="4 3" d="M278 333.500h800M278 390.500h800M278 506.500h800M278 563.500h800" />
      </g>
      <g stroke="#000" fill="none" shapeRendering="crispEdges">
        <path d="M277.500 275.500h801v346h-801zM678.500 272v4M274 448.500h808" />
        <path d={TICKS} />
      </g>
      <L c="#f00" d={CH_A} /><L c="#f00" d={CH_B} />
      <g shapeRendering="crispEdges"><L c="#00f" d="M581.500 275v346" /><L c="#f00" d="M624.500 275v346" /></g>
      <path d="M573 267h17l-8.500 8.500z" fill="#00f" /><path d="M617.500 269h13.500l-6.500 6.500z" fill="#f00" />
      <text x="581.500" y="273" fontSize="8" fontWeight="bold" fill="#fff" textAnchor="middle" fontFamily="Liberation Sans">2</text>
      <L c="#fff" d="M624.500 269.500v4" />
      <path d="m581.500 351 2.500 3.500v2.500h-5v-2.500z" fill="#fff" stroke="#00f" />
      <path d="m624.500 446 2.500 3.500-2.500 3.500-2.500-3.500z" fill="#fff" stroke="#f00" />
      <path d="M581.500 447v4" stroke="#ff0" />
    </svg>
  );
}

const TONES = {
  raised: "h-[26px] border-[#d4d4d4] border-b-[#bcbcbc] bg-[#fdfdfd]",
  flat: "h-[25px] border-[#ebebeb] bg-[#f8f8f8]",
  dim: "h-[25px] border-[#ebebeb] bg-[#f8f8f8] text-[#9a9a9a]",
  arrow: "h-[23px] border-[#d4d4d4] border-b-[#bcbcbc] bg-[#fdfdfd]",
  big: "h-[32px] border-[#d4d4d4] border-b-[#bcbcbc] bg-[#fdfdfd]",
  primary: "h-[32px] border-[#0067c0] bg-[#fdfdfd]",
};
const Btn = ({ className = "", w, tone = "raised", children }) => (
  <div className={"flex shrink-0 items-center justify-center rounded-[4px] border leading-[20px] " + TONES[tone] + " " + className}>
    {w ? <Fit w={w}>{children}</Fit> : children}
  </div>
);
const Field = ({ className = "pl-[6px]", w, children }) => (
  <div className={"flex shrink-0 items-center border-b border-[#868686] bg-white leading-[20px] " + className}><Fit w={w}>{children}</Fit></div>
);
const Arrow = ({ flip }) => (
  <Btn tone="arrow" className="w-[20px]"><Svg s={14} className={flip ? "-scale-x-100" : ""}><path d="M0 8 7.500 0v5.500H16v5H7.500V16z" /></Svg></Btn>
);
const Ring = ({ className }) => <div className={"h-[20px] w-[20px] shrink-0 rounded-full border-[6.500px] border-[#c4c4c4] bg-white " + className} />;

const Group = ({ title, tw, className, children }) => (
  <div className={"flex h-[115px] flex-col " + className}>
    <div className="flex h-[18px] items-center">
      <div className="w-[6px] border-t border-[#dcdcdc]" />
      <Fit w={tw} className="mr-[3px] ml-[2px] pt-[2px] leading-[18px]">{title}</Fit>
      <div className="grow border-t border-[#dcdcdc]" />
    </div>
    <div className="mt-[-9px] flex grow flex-col border-r border-b border-[#dcdcdc] pt-[9px]">{children}</div>
  </div>
);
const Row = ({ className = "h-[32px]", children }) => <div className={"flex items-start " + className}>{children}</div>;

const READ = [
  ["Time", 36, "ml-[40px] w-[87px]", "Channel_A", 77, "w-[112px]", "Channel_B", 75],
  ["4.330 s", 54, "ml-[24px] w-[93px]", "-259.674 nV", 89, "w-[127px]", "-2.660 V", 62],
  ["4.325 s", 54, "ml-[24px] w-[108px]", "16.430 V", 65, "w-[112px]", "17.223 V", 65],
  ["-5.368 ms", 73, "ml-[15px] w-[117px]", "16.430 V", 65, "w-[112px]", "19.884 V", 65],
];

function Scope() {
  return (
    <div className="absolute top-[220px] left-[266px] flex h-[649px] w-[823px] flex-col rounded-[10px] border border-[#a8a8a8] bg-[#f0f0f0] text-[16px] text-[#111] shadow-[0_24px_64px_8px_rgba(0,0,0,0.42),0_2px_12px_rgba(0,0,0,0.25)]">
      <div className="flex h-[43px] shrink-0 items-center justify-between rounded-t-[9px] bg-linear-to-r from-[#eff3fc] to-[#f3f3f7] pr-[15px] pb-[2px] pl-[11px]">
        <Fit w={147} className="text-[16.500px]">Oscilloscope-XSC1</Fit>
        <svg width="16" height="16"><L w={1.3} d="m1 1 14 14M15 1 1 15" /></svg>
      </div>
      <div className="h-[368px] shrink-0 border-t-2 border-r border-b-2 border-l-2 border-t-[#6d6d6d] border-r-[#c8c8c8] border-b-[#6d6d6d] border-l-[#8d8d8d]"><Plot /></div>
      <div className="flex h-[23px] shrink-0 justify-center pt-[8px]"><div className="ml-[366px] h-[4px] w-[25px] bg-[#888]" /></div>
      <div className="flex h-[98px] shrink-0">
        <div className="flex h-[87px] w-[88px] flex-col border-t border-r border-b border-[#a0a0a0] pt-[8px] pl-[8px]">
          <div className="flex h-[26px] items-center gap-[4px]"><Fit w={18} className="mr-[8px]">T1</Fit><Arrow /><Arrow flip /></div>
          <div className="flex h-[25px] items-center gap-[4px]"><Fit w={18} className="mr-[8px] pb-[6px]">T2</Fit><Arrow /><Arrow flip /></div>
          <Fit w={44} className="leading-[24px]">T2-T1</Fit>
        </div>
        <div className="ml-[1px] flex h-[87px] w-[485px] flex-col border-t-2 border-b-2 border-l-2 border-t-[#7a7a7a] border-b-white border-l-[#7a7a7a] bg-white pt-[1px]">
          {READ.map(([a, aw, ac, b, bw, bc, c, cw], i) => (
            <div key={i} className="flex h-[19px] shrink-0 leading-[19px]">
              <div className={"shrink-0 " + ac}><Fit w={aw}>{a}</Fit></div>
              <div className={"shrink-0 " + bc}><Fit w={bw}>{b}</Fit></div>
              <Fit w={cw}>{c}</Fit>
            </div>
          ))}
        </div>
        <div className="ml-[11px] flex flex-col gap-[8px] pt-[11px]">
          <Btn tone="primary" w={56} className="w-[92px]">Reverse</Btn>
          <Btn tone="big" w={34} className="w-[92px]">Save</Btn>
        </div>
        <div className="flex items-end pb-[5px] pl-[13px]">
          <Fit w={79} className="leading-[22px]">Ext. trigger</Fit>
          <div className="ml-[8px] h-[20px] w-[20px] rounded-full border border-[#c4c4c4] bg-[#fafafa]" />
        </div>
      </div>
      <div className="flex shrink-0">
        <Group title="Timebase" tw={69} className="w-[195px]">
          <Row>
            <Fit w={42} className="mt-[8px] ml-[3px] leading-[20px]">Scale:</Fit>
            <Field w={74} className="mt-[2px] ml-[13px] h-[27px] w-[126px] pb-[3px] pl-[6px]">10 ms/Div</Field>
          </Row>
          <Row>
            <Fit w={85} className="mt-[4px] ml-[3px] leading-[20px]">X pos.(Div):</Fit>
            <Field w={9} className="ml-[6px] h-[28px] w-[90px] pl-[6px]">0</Field>
          </Row>
          <Row className="h-[32px] gap-[3px] pt-[2px] pl-[11px]">
            <Btn w={26} tone="flat" className="w-[35px]">Y/T</Btn><Btn w={29} className="w-[39px]">Add</Btn><Btn w={26} className="w-[41px]">B/A</Btn><Btn w={27} className="w-[42px]">A/B</Btn>
          </Row>
        </Group>
        <Group title="Channel A" tw={72} className="w-[194px]">
          <Row>
            <Fit w={41} className="mt-[8px] ml-[4px] leading-[20px]">Scale:</Fit>
            <Field w={67} className="mt-[2px] ml-[12px] h-[27px] w-[130px] pb-[3px] pl-[6px]">10  V/Div</Field>
          </Row>
          <Row>
            <Fit w={85} className="mt-[4px] ml-[4px] leading-[20px]">Y pos.(Div):</Fit>
            <Field w={9} className="ml-[8px] h-[28px] w-[90px] pl-[6px]">0</Field>
          </Row>
          <Row className="h-[32px] gap-[2px] pt-[2px] pl-[4px]">
            <Btn w={21} className="w-[36px]">AC</Btn><Btn w={9} className="w-[39px]">0</Btn><Btn w={21} tone="flat" className="w-[38px]">DC</Btn>
            <Ring className="mt-[2px] ml-[39px]" />
          </Row>
        </Group>
        <Group title="Channel B" tw={72} className="w-[196px]">
          <Row>
            <Fit w={41} className="mt-[8px] ml-[3px] leading-[20px]">Scale:</Fit>
            <Field w={67} className="mt-[2px] ml-[14px] h-[27px] w-[131px] pb-[3px] pl-[6px]">20  V/Div</Field>
          </Row>
          <Row>
            <Fit w={86} className="mt-[4px] ml-[3px] leading-[20px]">Y pos.(Div):</Fit>
            <Field w={9} className="ml-[10px] h-[28px] w-[90px] pl-[6px]">0</Field>
          </Row>
          <Row className="h-[32px] gap-[3px] pt-[5px] pl-[6px]">
            <Btn w={21} className="w-[36px]">AC</Btn><Btn w={9} className="w-[33px]">0</Btn><Btn w={21} tone="flat" className="w-[37px]">DC</Btn><Btn w={6} className="w-[27px]">-</Btn>
            <Ring className="mt-[1px] ml-[19px]" />
          </Row>
        </Group>
        <Group title="Trigger" tw={52} className="w-[235px]">
          <Row className="h-[34px] pt-[6px] pl-[5px]">
            <Fit w={40} className="mt-[2px] leading-[20px]">Edge:</Fit>
            <Btn tone="flat" className="ml-[23px] w-[25px]"><Svg s={15}><L w={1.6} d="M1 14.500h6.500v-13H14M3.500 9h8M5 9l2.500-3L10 9" /></Svg></Btn>
            <Btn className="ml-[2px] w-[25px]"><Svg s={15}><L w={1.6} d="M1 1.500h6.500v13H14M3.500 7h8M5 7l2.500 3L10 7" /></Svg></Btn>
            <Btn tone="flat" w={10} className="ml-[8px] mt-[1px] w-[27px]">A</Btn><Btn tone="dim" w={9} className="ml-[3px] mt-[1px] w-[28px]">B</Btn><Btn tone="dim" w={22} className="ml-[4px] mt-[1px] w-[32px]">Ext</Btn>
          </Row>
          <Row className="h-[30px] pl-[5px]">
            <Fit w={41} className="mt-[2px] leading-[20px]">Level:</Fit>
            <Field w={9} className="mt-[2px] ml-[22px] h-[28px] w-[116px] pl-[7px]">0</Field>
            <Field w={10} className="mt-[2px] ml-[2px] h-[28px] w-[36px] pb-[3px] pl-[9px]">V</Field>
          </Row>
          <Row className="h-[32px] gap-[3px] pt-[2px] pl-[7px]">
            <Btn w={43} className="w-[55px]">Single</Btn><Btn w={52} className="w-[62px]">Normal</Btn><Btn w={33} className="w-[44px]">Auto</Btn><Btn w={37} tone="flat" className="w-[48px]">None</Btn>
          </Row>
        </Group>
      </div>
    </div>
  );
}

/* ---------- status bar and taskbar ---------- */

function StatusBar() {
  return (
    <div className="flex h-[25px] items-center border-t border-[#d7d7d7] pt-[1px] text-[17.500px] leading-[24px] text-[#111]">
      <div className="flex w-[1342px] pl-[2px]"><Fit w={142}>For Help, press F1</Fit></div>
      <div className="w-[148px]">-</div>
      <div className="h-[23px] w-[182px] border-l border-[#d0d0d0]" />
      <div className="flex h-[23px] w-[183px] items-center border-l border-[#d0d0d0] pl-[4px]"><Fit w={127}>DCsweep: 2.000</Fit></div>
      <div className="flex h-[23px] items-center gap-[2px] border-l border-[#d0d0d0] pl-[4px]">
        {[0, 1, 2, 3, 4, 5, 6].map((k) => <div key={k} className="h-[13px] w-[6px] border-t border-r border-b border-l border-t-[#a0a0a0] border-r-[#fafafa] border-b-[#fafafa] border-l-[#a0a0a0] bg-[#e6e6e6]" />)}
      </div>
    </div>
  );
}

const TaskIcon = ({ children, dot, on }) => (
  <div className="relative flex h-full w-[66px] items-center justify-center pl-[1px]">
    {on && <div className="absolute top-[5px] left-[5px] h-[61px] w-[60px] rounded-[6px] border border-white/5 bg-white/5" />}
    {on && <div className="absolute top-[5px] left-[4px] h-[61px] w-[54px] rounded-[6px] border border-white/10 bg-white/8" />}
    <svg width="37" height="37" viewBox="0 0 36 36" className="relative">{children}</svg>
    {dot && <div className="absolute bottom-[7px] left-[30px] h-[5px] w-[8px] rounded-full bg-[#9a9ead]" />}
    {on && <div className="absolute bottom-[7px] left-[22px] h-[5px] w-[24px] rounded-full bg-[#4cc2ff]" />}
  </div>
);

function Taskbar() {
  return (
    <div className="flex h-[72px] border-t-2 border-[#3b4352] bg-[linear-gradient(90deg,#1b222c_0px,#1a232f_290px,#11224c_400px,#10215a_520px,#121d5c_660px,#10225a_900px,#1a1d4a_1040px,#1b1e3a_1110px,#101f56_1200px,#13204c_1320px,#1c2138_1400px,#1c222c_1520px,#1b2129_1920px)] text-white">
      <div className="flex w-[564px] pt-[15px] pl-[28px]">
        <svg width="38" height="38" viewBox="0 0 38 38">
          <path d="M17 18v14q0 4-3.500 4T10 32" fill="none" stroke="#8b8480" strokeWidth="3" />
          <path d="M1 22Q3 9 17 9t16 13q-3-2-5 0-3-2-5.500 0-3-2-5.500 0-3-2-5.500 0-3-2-5.500 0-2-2-5 0z" fill="#5ab4f2" />
          <path d="M11 22q1-10 6-13 5 3 6 13-3-2-6 0-3-2-6 0z" fill="#8fd0fa" />
          <path d="m19 6 3-4M26 5l3-4M26 11l4-4M33 10l3-4M33 18l3-4" stroke="#3fa0ee" strokeWidth="2.400" strokeLinecap="round" />
        </svg>
        <div className="ml-[9px] flex flex-col text-[16.500px] leading-[24px]">
          <Fit w={38} className="mt-[-6px]">23°C</Fit>
          <Fit w={101} className="text-[#c3c6ca]">Raining now</Fit>
        </div>
      </div>
      <TaskIcon>
        <defs><linearGradient id="wg" x2="1" y2="1"><stop offset="0" stopColor="#8fe6ff" /><stop offset="1" stopColor="#0a92f0" /></linearGradient></defs>
        <g fill="url(#wg)"><rect x="1.500" y="1.500" width="16" height="16" rx="1" /><rect x="18.500" y="1.500" width="16" height="16" rx="1" fill="#4fcdfc" /><rect x="1.500" y="18.500" width="16" height="16" rx="1" fill="#3fc0fa" /><rect x="18.500" y="18.500" width="16" height="16" rx="1" fill="#16a2f6" /></g>
      </TaskIcon>
      <TaskIcon><circle cx="16" cy="16" r="12.500" fill="#454a86" stroke="#e2e4ea" strokeWidth="2.600" /><path d="m24.500 25 7 8" stroke="#d4d6de" strokeWidth="4" strokeLinecap="round" /></TaskIcon>
      <TaskIcon><rect x="1" y="11" width="25" height="23" rx="1.500" fill="#5c5c5c" /><rect x="9.500" y="2" width="25" height="24" rx="1.500" fill="#f0f0f0" /><rect x="9.500" y="11" width="16.500" height="15" fill="#b4b4b4" /></TaskIcon>
      <TaskIcon><rect width="36" height="36" fill="#0061fe" /><g fill="#fff"><path d="m12.500 9.500 5.500 3.500-5.500 3.500L7 13zM23.500 9.500 29 13l-5.500 3.500L18 13zM12.500 16.500 18 20l-5.500 3.500L7 20zM23.500 16.500 29 20l-5.500 3.500L18 20zM18 21.200l5.500 3.500L18 28.200l-5.500-3.500z" /></g></TaskIcon>
      <TaskIcon><path d="M9 8V2.500h17V8" fill="none" stroke="#2aa7ee" strokeWidth="2.200" /><path d="M1 6h34v26q0 3-3 3H4q-3 0-3-3z" fill="#eeeff2" /><rect x="10" y="13" width="7.500" height="7.500" fill="#f25022" /><rect x="18.500" y="13" width="7.500" height="7.500" fill="#7fba00" /><rect x="10" y="21.500" width="7.500" height="7.500" fill="#00a4ef" /><rect x="18.500" y="21.500" width="7.500" height="7.500" fill="#ffb900" /></TaskIcon>
      <TaskIcon>
        <defs><linearGradient id="dg"><stop offset="0" stopColor="#f0359f" /><stop offset=".45" stopColor="#f50b25" /><stop offset=".7" stopColor="#f81a0a" /><stop offset="1" stopColor="#ffa51f" /></linearGradient></defs>
        <path d="m18 0 18 18-18 18L0 18z" fill="url(#dg)" />
      </TaskIcon>
      <TaskIcon dot><path d="M0 4q0-2 2-2h9l4 4v6H0z" fill="#dba20f" /><path d="M0 8h11l4-3h19q2 0 2 2v26q0 2-2 2H2q-2 0-2-2z" fill="#fccf3e" /><path d="M6 35V27q0-3 3-3h18q3 0 3 3v8z" fill="#1478cf" /><path d="M10 29h16" stroke="#0b4f96" strokeWidth="2" /></TaskIcon>
      <TaskIcon>
        <defs><linearGradient id="eg"><stop offset="0" stopColor="#1e9be4" /><stop offset=".6" stopColor="#2fc2dc" /><stop offset="1" stopColor="#58d84e" /></linearGradient></defs>
        <path d="M0 18C0 6 9 0 18 0s18 7 18 15c0 6-5 9-10 9-4 0-6-1-5-4 2-4-1-9-7-9C6 11 1 14 0 18z" fill="url(#eg)" />
        <path d="M0 18c1-5 6-8 11-7 5 0 8 3 9 6-5-3-10 1-9 7 2 8 11 10 19 6 2-1 3 0 2 1-3 3-8 5-13 5C8 36 0 28 0 18z" fill="#1a80d6" />
        <path d="M11 24c-1-6 4-10 9-7 1 2 0 3 0 5-1 5 6 8 12 5l2 1q-2 2-4 3c-8 4-17 1-19-7z" fill="#0d56a6" />
        <path d="M20 17c1 3-1 4-1 6 0 2 3 4 8 4 3 0 6-1 7-2l-1-3q-3 2-7 2c-4 0-6-1-5-4z" fill="#11205a" />
      </TaskIcon>
      <TaskIcon><path d="M9 1h18l3 3 3 4-1 4 0 9q-2 6-6 8l-8 7-8-7q-4-2-6-8l-1-9-1-4 3-4z" fill="#fb4a21" /><path d="M9 9l4 1h10l4-1 2 5-3 6 1 4-5 2-4 4-4-4-5-2 1-4-3-6z" fill="#fff" /><path d="m12 14 4 1 0 3-3-2zM24 14l-4 1 0 3 3-2zM15 22l3 3 3-3-3-1.500z" fill="#fb4a21" /></TaskIcon>
      <TaskIcon dot><rect x="2" y="2" width="32" height="32" rx="2" fill="#2ba6ea" /><path d="M18 26 25 17l9 10v5q0 2-2 2H20z" fill="#7d8fd8" /><path d="M2 25 12 13l16 21H4q-2 0-2-2z" fill="#12508f" /><circle cx="24" cy="9.500" r="3" fill="#fff" /></TaskIcon>
      <TaskIcon dot><rect x="8" y="2" width="28" height="32" rx="2" fill="#1a9155" /><rect x="22" y="2" width="13" height="9" fill="#35c381" /><rect x="22" y="11" width="13" height="8" fill="#21a366" /><rect x="22" y="19" width="13" height="8" fill="#107c41" /><rect x="8" y="27" width="27" height="7" fill="#185c37" /><rect y="9.500" width="18" height="18" rx="1.500" fill="#107c41" /><text x="9" y="24" fontSize="14" fontWeight="bold" fill="#fff" textAnchor="middle" fontFamily="Open Sans">X</text></TaskIcon>
      <TaskIcon on><svg x="2" y="2" width="32" height="32" viewBox="0 0 16 16"><AppArt /></svg></TaskIcon>
      <div className="flex items-center pb-[2px] pl-[185px]">
        <svg width="20" height="12"><L c="#fff" w={1.5} d="m1 11 9-9 9 9" /></svg>
        <div className="ml-[23px] flex w-[36px] flex-col items-center text-[16px] leading-[23px]"><Fit w={35}>ENG</Fit><Fit w={18}>IN</Fit></div>
        <svg width="25" height="25" viewBox="0 0 24 24" className="ml-[26px]" fill="none" stroke="#fff" strokeWidth="1.600"><circle cx="11.500" cy="11.500" r="10.300" /><path d="M1 8.500h21M1 14.500h11M11.500 1C5 6 5 17 11.500 22M11.500 1q5 4 4.500 10" /><circle cx="17.500" cy="17.500" r="5.800" fill="#1c222b" /><path d="m13.500 21.500 8-8" /></svg>
        <svg width="25" height="20" viewBox="0 0 25 20" className="ml-[11px]" fill="none" stroke="#fff" strokeWidth="1.600"><path d="M1 7h4l6-5.500v17L5 13H1zM15 6l8 8M23 6l-8 8" /></svg>
        <svg width="25" height="18" viewBox="0 0 25 18" className="ml-[11px]" fill="none" stroke="#fff" strokeWidth="1.700"><rect x="1" y="1.500" width="20" height="15" rx="3.500" /><rect x="4" y="4.500" width="6" height="9" fill="#fff" /><path d="M22.500 6.500v5" strokeWidth="2.500" /></svg>
        <div className="ml-[22px] flex w-[89px] flex-col items-end text-[16.500px] leading-[24px]"><Fit w={71}>12:31 AM</Fit><Fit w={89}>18-10-2022</Fit></div>
        <div className="ml-[11px] flex h-[24px] w-[24px] items-center justify-center rounded-full bg-[#4cc2ff] text-[14px] text-[#10202c]">2</div>
      </div>
    </div>
  );
}

export default function App() {
  return (
    <div className="relative flex h-[1080px] w-[1920px] flex-col overflow-hidden bg-[#f0f0f0] font-['Open_Sans','Noto_Sans',sans-serif] text-black">
      <TitleBar />
      <MenuBar />
      <ToolbarOne />
      <ToolbarTwo />
      <div className="flex h-[835px]">
        <DesignToolbox />
        <Workspace />
        <InstrumentBar />
      </div>
      <StatusBar />
      <Scope />
      <Taskbar />
    </div>
  );
}
